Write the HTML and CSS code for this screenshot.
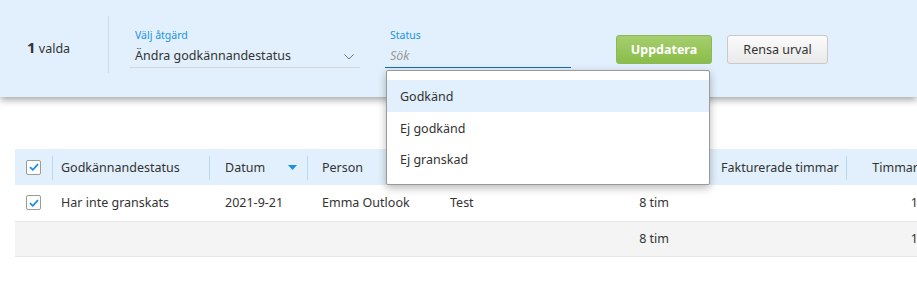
FILE: index.html
```html
<!DOCTYPE html>
<html lang="sv">
<head>
<meta charset="utf-8">
<link rel="stylesheet" href="styles.css">
</head>
<body>
<div class="page">
  <div class="bulkbar">
    <div class="count"><b>1</b> valda</div>
    <div class="vdivider"></div>
    <div class="field field-action">
      <label class="flabel">Välj åtgärd</label>
      <div class="fcontrol">
        <span class="fvalue">Ändra godkännandestatus</span>
        <svg class="chev" width="10" height="6" viewBox="0 0 10 6"><path d="M0.5 0.5 L5 5 L9.5 0.5" fill="none" stroke="#777" stroke-width="1"/></svg>
      </div>
    </div>
    <div class="field field-status">
      <label class="flabel">Status</label>
      <div class="fcontrol active">
        <span class="placeholder">Sök</span>
      </div>
      <ul class="dropdown">
        <li class="opt hl">Godkänd</li>
        <li class="opt">Ej godkänd</li>
        <li class="opt">Ej granskad</li>
      </ul>
    </div>
    <button class="btn btn-primary">Uppdatera</button>
    <button class="btn btn-default">Rensa urval</button>
  </div>

  <table class="grid">
    <colgroup>
      <col class="c-check"><col class="c-status"><col class="c-date"><col class="c-person"><col class="c-proj"><col class="c-hours"><col class="c-billed"><col class="c-hours2">
    </colgroup>
    <thead>
      <tr>
        <th class="cb"><span class="box"><svg width="10" height="8" viewBox="0 0 10 8"><path d="M1 4.2 L3.8 6.8 L9 1.2" fill="none" stroke="#1a8fe3" stroke-width="1.8"/></svg></span></th>
        <th class="sep p9">Godkännandestatus</th>
        <th class="sep p16"><div class="sorthead"><span>Datum</span><svg class="sort" width="9" height="5" viewBox="0 0 9 5"><path d="M0 0 H9 L4.5 5 Z" fill="#1a8fe3"/></svg></div></th>
        <th class="sep">Person</th>
        <th class="sep"></th>
        <th class="sep num"></th>
        <th class="sep">Fakturerade timmar</th>
        <th class="sep num">Timmar</th>
      </tr>
    </thead>
    <tbody>
      <tr class="row">
        <td class="cb"><span class="box"><svg width="10" height="8" viewBox="0 0 10 8"><path d="M1 4.2 L3.8 6.8 L9 1.2" fill="none" stroke="#1a8fe3" stroke-width="1.8"/></svg></span></td>
        <td class="p9">Har inte granskats</td>
        <td class="p16">2021-9-21</td>
        <td>Emma Outlook</td>
        <td>Test</td>
        <td class="num">8 tim</td>
        <td></td>
        <td class="num">1</td>
      </tr>
      <tr class="sum">
        <td></td><td></td><td></td><td></td><td></td>
        <td class="num">8 tim</td>
        <td></td>
        <td class="num">1</td>
      </tr>
    </tbody>
  </table>
</div>
</body>
</html>
```
FILE: styles.css
```css
* { box-sizing: border-box; }
html, body { margin: 0; padding: 0; }
body {
  font-family: "Noto Sans", "Open Sans", sans-serif;
  font-size: 12.5px;
  color: #333;
  background: #fff;
  overflow: hidden;
}
.page { width: 917px; height: 293px; overflow: hidden; }

.bulkbar {
  position: relative;
  z-index: 2;
  height: 97px;
  background: #e1f0fc;
  box-shadow: 0 3px 7px rgba(0,0,0,0.35);
  display: flex;
  align-items: flex-start;
}
.count {
  width: 108px;
  padding: 37px 0 0 27px;
  font-size: 12.5px;
  line-height: 20px;
}
.count b { font-size: 15px; font-weight: 700; }
.vdivider {
  width: 1px;
  height: 57px;
  margin-top: 16px;
  background: #d3d9de;
}
.field {
  position: relative;
  margin-top: 28px;
}
.field-action { margin-left: 21px; width: 230px; }
.field-status { margin-left: 25px; width: 186px; }
.flabel {
  display: block;
  padding-left: 5px;
  font-size: 10.5px;
  line-height: 15px;
  color: #1a93e6;
}
.fcontrol {
  height: 25px;
  display: flex;
  align-items: center;
  justify-content: space-between;
  padding: 1px 6px 0 5px;
  border-bottom: 1px solid #d4d7da;
}
.fcontrol.active { border-bottom: 1px solid #1c6ea8; }
.fvalue { font-size: 12.5px; color: #333; }
.placeholder { font-style: italic; color: #999; }
.chev { margin-top: 2px; }

.dropdown {
  position: absolute;
  left: 1px;
  top: 42px;
  width: 324px;
  height: 115px;
  margin: 0;
  padding: 9px 0 0;
  list-style: none;
  background: #fff;
  border: 1px solid #9a9a9a;
  border-radius: 2px;
  box-shadow: 0 3px 8px rgba(0,0,0,0.28);
}
.opt {
  height: 31.5px;
  line-height: 33px;
  padding-left: 13px;
  font-size: 12.5px;
  color: #333;
}
.opt.hl { background: #e1f0fc; }

.btn {
  margin-top: 35px;
  height: 29px;
  border-radius: 3px;
  font-family: "Noto Sans", sans-serif;
  font-size: 12.5px;
  padding: 0;
}
.btn-primary {
  margin-left: 45px;
  width: 96px;
  color: #fff;
  font-weight: 700;
  background: linear-gradient(#a6ce6e, #8abd49);
  border: 1px solid #8cb955;
}
.btn-default {
  margin-left: 15px;
  width: 101px;
  color: #333;
  background: linear-gradient(#fbfbfb, #e9e9e9);
  border: 1px solid #c9c9c9;
}

.grid {
  margin: 52px 0 0 15px;
  border-collapse: collapse;
  table-layout: fixed;
  width: 918px;
}
.c-check { width: 37px; }
.c-status { width: 157px; }
.c-date { width: 98px; }
.c-person { width: 128px; }
.c-proj { width: 125px; }
.c-hours { width: 146px; }
.c-billed { width: 140px; }
.c-hours2 { width: 87px; }

.grid th, .grid td {
  padding: 0 15px;
  text-align: left;
  font-weight: 400;
  white-space: nowrap;
  overflow: hidden;
}
.grid thead tr { background: #e1f0fc; height: 36px; }
.grid th { position: relative; }
.grid th.sep::before {
  content: "";
  position: absolute;
  left: 0;
  top: 7px;
  bottom: 5px;
  width: 1px;
  background: #b7daf3;
}
.grid .p9 { padding-left: 9px; }
.grid .p16 { padding-left: 16px; }
.grid th.p16 { padding-right: 10px; }
.grid .num { text-align: right; }
.grid th.num, .grid td.num { padding-right: 15px; }
.grid tr > :nth-child(6) { padding-right: 37px; }
.grid .cb { padding: 0 0 0 11px; }
.box {
  display: flex;
  align-items: center;
  justify-content: center;
  width: 15px;
  height: 15px;
  background: #fff;
  border: 1px solid #9b9b9b;
  border-radius: 2px;
}
.sorthead {
  display: flex;
  align-items: center;
  justify-content: space-between;
}
.row { height: 36px; border-bottom: 1px solid #e6e6e6; }
.sum { height: 35px; background: #f4f4f4; border-bottom: 1px solid #e6e6e6; }
```
